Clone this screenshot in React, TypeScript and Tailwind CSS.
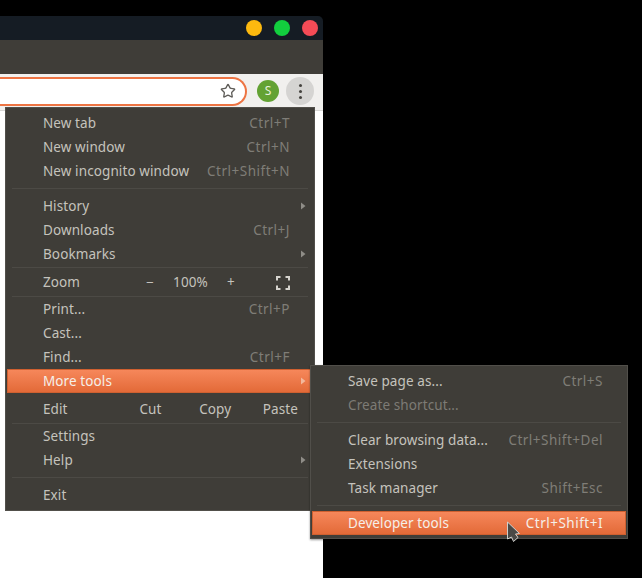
import { Star } from 'lucide-react';

type Row = { label: string; shortcut?: string; arrow?: boolean; active?: boolean; disabled?: boolean };

const font = "font-['Noto_Sans',sans-serif]";

function Arrow({ active }: { active?: boolean }) {
  return (
    <svg
      width="6"
      height="8"
      viewBox="0 0 6 8"
      className={active ? 'absolute right-[6px] top-1/2 -translate-y-1/2' : 'absolute right-[8px] top-1/2 -translate-y-1/2'}
    >
      <path d="M1 0.5 L5.5 4 L1 7.5 Z" fill={active ? '#f3b89c' : '#8f8d87'} />
    </svg>
  );
}

function MenuRow({ label, shortcut, arrow, active, disabled }: Row) {
  return (
    <div
      className={
        active
          ? 'relative mx-px flex h-6 items-center justify-between border border-[#cf6030] bg-gradient-to-b from-[#f6875a] to-[#e36a38] pl-[35px] pr-[22px] pt-px text-[#f5efe9]'
          : 'relative flex h-6 items-center justify-between pl-[37px] pr-[24px] pt-px'
      }
    >
      <span className={disabled ? 'text-[#7d7b75]' : active ? '' : 'text-[#c5c3bd]'}>{label}</span>
      {shortcut && <span className={active ? 'tracking-[0.5px]' : 'tracking-[0.5px] text-[#7f7d77]'}>{shortcut}</span>}
      {arrow && <Arrow active={active} />}
    </div>
  );
}

function Sep({ className }: { className: string }) {
  return (
    <div className={`flex items-center px-[6px] ${className}`}>
      <div className="h-px w-full bg-[#4c4a45]" />
    </div>
  );
}

function MainMenu() {
  return (
    <div className="absolute left-[5px] top-[107px] z-10 flex w-[310px] flex-col border border-[#514f4a] bg-[#3f3d38] pt-[3px] text-[13.5px] tracking-[0.1px]">
      <MenuRow label="New tab" shortcut="Ctrl+T" />
      <MenuRow label="New window" shortcut="Ctrl+N" />
      <MenuRow label="New incognito window" shortcut="Ctrl+Shift+N" />
      <Sep className="h-[11px]" />
      <MenuRow label="History" arrow />
      <MenuRow label="Downloads" shortcut="Ctrl+J" />
      <MenuRow label="Bookmarks" arrow />
      <Sep className="h-[3px]" />
      <div className="flex h-[26px] items-center pl-[37px] pr-[24px] pt-px">
        <span className="w-[95px] text-[#c5c3bd]">Zoom</span>
        <span className="w-[24px] text-center text-[#c5c3bd]">−</span>
        <span className="w-[57px] text-center text-[#c5c3bd]">100%</span>
        <span className="w-[24px] text-center text-[#c5c3bd]">+</span>
        <svg width="14" height="14" viewBox="0 0 14 14" className="ml-auto" fill="none" stroke="#d6d4ce" strokeWidth="2">
          <path d="M1 4.5V1H4.5M9.5 1H13V4.5M13 9.5V13H9.5M4.5 13H1V9.5" />
        </svg>
      </div>
      <Sep className="h-[2px]" />
      <MenuRow label="Print..." shortcut="Ctrl+P" />
      <MenuRow label="Cast..." />
      <MenuRow label="Find..." shortcut="Ctrl+F" />
      <MenuRow label="More tools" arrow active />
      <div className="flex h-[29px] items-center pl-[37px] pr-[16px] pt-[3px] text-[#c5c3bd]">
        <span className="w-[97px]">Edit</span>
        <span className="w-[60px]">Cut</span>
        <span className="w-[64px]">Copy</span>
        <span>Paste</span>
      </div>
      <Sep className="h-[2px]" />
      <MenuRow label="Settings" />
      <MenuRow label="Help" arrow />
      <Sep className="h-[11px]" />
      <MenuRow label="Exit" />
      <div className="h-[3px]" />
    </div>
  );
}

function SubMenu() {
  return (
    <div className="absolute left-[310px] top-[365px] z-20 flex w-[318px] flex-col border border-[#514f4a] bg-[#3f3d38] pt-[3px] text-[13.5px] tracking-[0.1px] shadow-[0_1px_2px_rgba(0,0,0,0.4)]">
      <MenuRow label="Save page as..." shortcut="Ctrl+S" />
      <MenuRow label="Create shortcut..." disabled />
      <Sep className="h-[11px]" />
      <MenuRow label="Clear browsing data..." shortcut="Ctrl+Shift+Del" />
      <MenuRow label="Extensions" />
      <MenuRow label="Task manager" shortcut="Shift+Esc" />
      <Sep className="h-[11px]" />
      <MenuRow label="Developer tools" shortcut="Ctrl+Shift+I" active />
      <div className="h-[3px]" />
    </div>
  );
}

export default function App() {
  return (
    <div className={`relative h-[578px] w-[642px] overflow-hidden bg-black pt-4 ${font}`}>
      <div className="flex h-[562px] w-[323px] flex-col overflow-hidden rounded-tr-[5px]">
        {/* Title bar */}
        <div className="flex h-6 items-center justify-end gap-3 bg-[#151c24] pr-[5px]">
          <div className="h-4 w-4 rounded-full bg-[#fdb90f]" />
          <div className="h-4 w-4 rounded-full bg-[#12ce3e]" />
          <div className="h-4 w-4 rounded-full bg-[#f44b56]" />
        </div>
        {/* Tab strip */}
        <div className="h-[34px] bg-[#3f3d38]" />
        {/* Toolbar */}
        <div className="flex h-[37px] items-center border-b border-[#d8d7d5] bg-[#f1f0ee] pb-[2px]">
          <div className="flex h-[29px] w-[247px] items-center justify-end rounded-r-[15px] border-2 border-l-0 border-[#ed7443] bg-white pr-[9px]">
            <Star size={16} strokeWidth={2} className="text-[#5f5d59]" />
          </div>
          <div className="ml-[10px] flex h-[22px] w-[22px] items-center justify-center rounded-full bg-[#63a233] text-[12px] text-[#e8f0dc]">S</div>
          <div className="ml-[7px] flex h-7 w-7 flex-col items-center justify-center gap-[3px] rounded-full bg-[#d5d4d2]">
            <div className="h-[3px] w-[3px] rounded-full bg-[#45433f]" />
            <div className="h-[3px] w-[3px] rounded-full bg-[#45433f]" />
            <div className="h-[3px] w-[3px] rounded-full bg-[#45433f]" />
          </div>
        </div>
        {/* Page */}
        <div className="flex-1 bg-white" />
      </div>
      <MainMenu />
      <SubMenu />
      {/* Cursor */}
      <svg width="16" height="24" viewBox="0 0 16 24" className="absolute left-[506px] top-[521px] z-30">
        <path d="M1.5 1 L1.5 18 L5.5 16 L7.5 20.5 L12 16.5 L9.5 13 L13.5 12.5 Z" fill="#4a4946" stroke="#cfcfcc" strokeWidth="1" />
      </svg>
    </div>
  );
}
